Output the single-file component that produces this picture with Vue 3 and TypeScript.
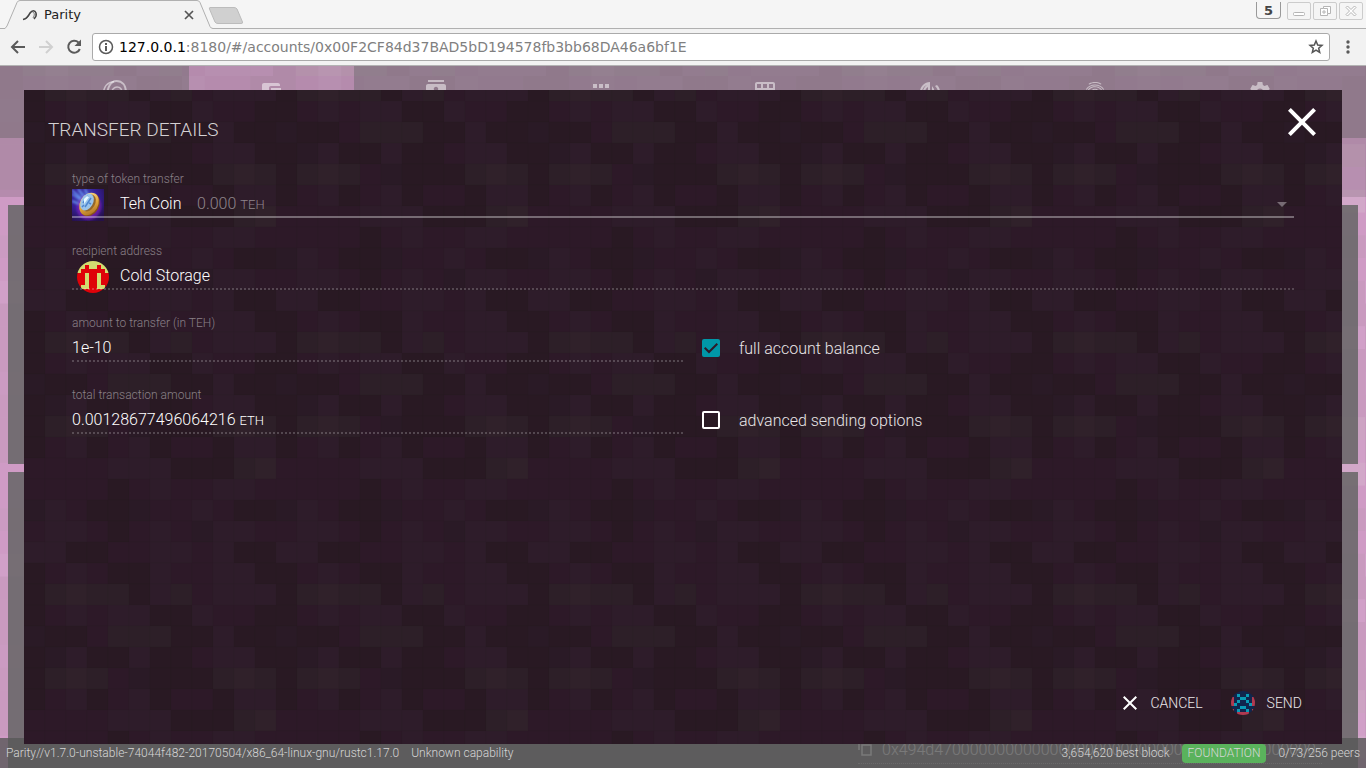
<script setup lang="ts">
import { ref } from 'vue'

const TILE = [
  'DMPMPPDDPMMD',
  'BDDMLLLDDPDD',
  'DBPDDPDDMPPD',
  'DLXLMBDDDLXL',
  'DMPDMPDMMDPP',
  'MMMMPPPDDDLX',
  'MMMMDMPMMPPM',
  'BPMDDBMMPMDD',
  'MPPMDMPMBPPM',
  'PPDDMMPPMPDD',
  'DMPMDDPMMPPD',
  'DLXLLDPLMPPP',
]
const DARK: Record<string, string> = {
  D: '#291923', B: '#2a1a26', M: '#2d1928', P: '#2e1c2a', L: '#2d1f28', X: '#30212a',
}
const PINK: Record<string, string> = {
  D: '#c99abf', B: '#cb9bc2', M: '#cf9bc5', P: '#d1a0c8', L: '#cda3c3', X: '#d2a8c9',
}
const cells = TILE.flatMap((row, y) => [...row].map((tone, x) => ({ x, y, tone })))

const navIcons = [
  { name: 'Accounts', d: 'M21 18v1c0 1.1-.9 2-2 2H5c-1.11 0-2-.9-2-2V5c0-1.1.89-2 2-2h14c1.1 0 2 .9 2 2v1h-9c-1.11 0-2 .9-2 2v8c0 1.1.89 2 2 2h9zm-9-2h10V8H12v8z' },
  { name: 'Contacts', d: 'M20 0H4v2h16V0zM4 24h16v-2H4v2zM20 4H4c-1.100 0-2 .9-2 2v12c0 1.100.9 2 2 2h16c1.100 0 2-.9 2-2V6c0-1.100-.9-2-2-2zm-8 2.750c1.240 0 2.250 1.010 2.250 2.250S13.240 11.250 12 11.250 9.750 10.240 9.750 9 10.760 6.750 12 6.750z' },
  { name: 'Applications', d: 'M4 8h4V4H4v4zm6 12h4v-4h-4v4zm-6 0h4v-4H4v4zm0-6h4v-4H4v4zm6 0h4v-4h-4v4zm6-10v4h4V4h-4zm-6 4h4V4h-4v4zm6 6h4v-4h-4v4zm0 6h4v-4h-4v4z' },
  { name: 'Contracts', d: 'M20 2H4c-1.100 0-2 .9-2 2v16c0 1.100.9 2 2 2h16c1.100 0 2-.9 2-2V4c0-1.100-.9-2-2-2zM8 20H4v-4h4v4zm0-6H4v-4h4v4zm0-6H4V4h4v4zm6 12h-4v-4h4v4zm0-6h-4v-4h4v4zm0-6h-4V4h4v4zm6 12h-4v-4h4v4zm0-6h-4v-4h4v4zm0-6h-4V4h4v4z' },
  { name: 'Status', d: 'M2 12C2 6.500 6.500 2 12 2v9h-2V7c-2 1-3 3-3 5H5c0-3 1.500-5.500 4-7-3 1-5 4-5 7zM14 10V6l2 3v3zM17 6l2-1c2 2 3 4 3 7h-2c0-2-1-4-3-6z' },
  { name: 'Signer', d: 'M17.810 4.470c-.08 0-.16-.02-.23-.06C15.660 3.420 14 3 12.010 3c-1.980 0-3.860.47-5.570 1.410-.24.13-.54.04-.68-.2-.13-.24-.04-.55.2-.68C7.820 2.520 9.860 2 12.010 2c2.130 0 3.990.47 6.030 1.520.25.13.34.43.21.67-.09.18-.26.28-.44.28zM3.500 9.720c-.4 0-.7-.5-.4-.8C5 6.200 8.300 4.600 12 4.600s7 1.600 8.900 4.300c.4.600-.4 1.200-.8.6C18.300 7 15.400 5.600 12 5.600S5.600 7 3.900 9.500zM4 13c0-4 3.600-6.700 8-6.700s8 2.900 8 7h-1c0-3.400-3-6-7-6s-7 2.500-7 5.700zM7.500 13c0-2.700 2-4.300 4.500-4.300s4.500 2 4.500 4.300h-1c0-1.800-1.500-3.300-3.500-3.300S8.500 11 8.500 13z' },
  { name: 'Settings', d: 'M19.430 12.980c.04-.32.07-.64.07-.98s-.03-.66-.07-.98l2.110-1.650c.19-.15.24-.42.12-.64l-2-3.460c-.12-.22-.39-.3-.61-.22l-2.490 1c-.52-.4-1.080-.73-1.690-.98l-.38-2.650C14.460 2.180 14.250 2 14 2h-4c-.25 0-.46.18-.49.42l-.38 2.650c-.61.25-1.170.59-1.690.98l-2.490-1c-.23-.09-.49 0-.61.22l-2 3.460c-.13.22-.07.49.12.64l2.110 1.650c-.04.32-.07.65-.07.98s.03.66.07.98l-2.110 1.650c-.19.15-.24.42-.12.64l2 3.460c.12.22.39.3.61.22l2.490-1c.52.4 1.080.73 1.690.98l.38 2.650c.03.24.24.42.49.42h4c.25 0 .46-.18.49-.42l.38-2.650c.61-.25 1.170-.59 1.690-.98l2.490 1c.23.09.49 0 .61-.22l2-3.460c.12-.22.07-.49-.12-.64l-2.110-1.650zM12 15.500c-1.930 0-3.500-1.570-3.500-3.500s1.570-3.500 3.500-3.500 3.500 1.570 3.500 3.500-1.570 3.500-3.500 3.500z' },
]

const coldStorage = ['yyyyyyyy', 'yyryyryy', 'yrrrrrry', 'rryrryrr', 'rryrryrr', 'rryrryrr', 'ryyrryyr', 'yrrrrrry']
const sender = ['nnnnnnnn', 'nntnntnn', 'rnnttnnr', 'rntnntnr', 'rtnnnntr', 'nnnttnnn', 'rntnntnr', 'nnrrrrnn']
const ID_COLORS: Record<string, string> = { y: '#d2dc70', r: '#df0209' }
const SEND_COLORS: Record<string, string> = { n: '#10264d', t: '#0a9bb5', r: '#b03a50' }

const token = ref('teh')
const recipient = ref('Cold Storage')
const amount = ref('1e-10')
const fullBalance = ref(true)
const advanced = ref(false)
const url = ref('127.0.0.1:8180/#/accounts/0x00F2CF84d37BAD5bD194578fb3bb68DA46a6bf1E')
const hash = '0x494d47' + '0'.repeat(41)
</script>

<template>
  <div class="window">
    <header class="browser">
      <div class="tabstrip">
        <svg class="tabshape" width="244" height="29" viewBox="0 0 244 29" aria-hidden="true">
          <path d="M0 28.500H5L7 26 17 2.500Q18 .5 20 .5H197Q199 .5 200 2.500L210 26.500Q211 28.500 213 28.500H244V29H0Z" fill="#f2f2f2" />
          <path d="M0 28.500H5L7 26 17 2.500Q18 .5 20 .5H197Q199 .5 200 2.500L210 26.500Q211 28.500 213 28.500H244" fill="none" stroke="#b0b0b0" />
          <path d="M210 7.500H234Q236 7.500 237 9L242.500 22Q243 23.500 241 23.500H218Q216 23.500 215 22L209.500 9Q209 7.500 210 7.500Z" fill="#d0d0d0" stroke="#bcbcbc" />
        </svg>
        <div class="tab">
          <svg width="16" height="16" viewBox="0 0 16 16" fill="none" stroke="#444" aria-hidden="true">
            <path d="M1 12.500C5 12 6 9 8 6c2-3 5-3 6 0s-1 5-2 6" stroke-width="1.500" />
            <path d="M3 12c4-1 4-5 6-7 2-1 4 1 3 4l-1 2" stroke-width="1" opacity=".7" />
          </svg>
          <span class="tabtitle">Parity</span>
          <button class="plain tabclose" aria-label="Close tab">
            <svg width="10" height="10" viewBox="0 0 10 10" stroke="#555" stroke-width="1.700"><path d="M1 1l8 8M9 1L1 9" /></svg>
          </button>
        </div>
        <div class="winbuttons">
          <span class="desk">5</span>
          <button aria-label="Minimize"><svg width="22" height="16" viewBox="0 0 22 16"><rect x="5.500" y="9.500" width="11" height="3" rx="1" /></svg></button>
          <button aria-label="Restore"><svg width="22" height="16" viewBox="0 0 22 16"><path d="M9.500 3.500h7v7h-3v2h-7v-7h3zM9 8h2v2H9zM9.500 5.500h4v5" /></svg></button>
          <button aria-label="Close window"><svg width="22" height="16" viewBox="0 0 22 16"><path d="M6 4.500l1.500-1.500L11 6.500 14.500 3 16 4.500 12.500 8 16 11.500 14.500 13 11 9.500 7.500 13 6 11.500 9.500 8z" /></svg></button>
        </div>
      </div>
      <div class="toolbar">
        <button class="plain" aria-label="Back"><svg width="20" height="20" viewBox="0 0 20 20" fill="none" stroke="#5a5a5a" stroke-width="2"><path d="M17 10H4M10 4l-6 6 6 6" /></svg></button>
        <button class="plain" aria-label="Forward" disabled><svg width="20" height="20" viewBox="0 0 20 20" fill="none" stroke="#d0d0d0" stroke-width="2"><path d="M3 10h13M10 4l6 6-6 6" /></svg></button>
        <button class="plain" aria-label="Reload"><svg width="20" height="20" viewBox="0 0 20 20"><path d="M14.500 5.500A6 6 0 1 0 15.800 12" fill="none" stroke="#5a5a5a" stroke-width="2" /><path d="M17 2.500V9h-6.500z" fill="#5a5a5a" /></svg></button>
        <div class="urlbar">
          <svg width="16" height="16" viewBox="0 0 16 16" aria-hidden="true"><circle cx="8" cy="8" r="6.500" fill="none" stroke="#5a5a5a" stroke-width="1.500" /><path d="M7 4h2v2H7zM7 7h2v5H7z" fill="#5a5a5a" /></svg>
          <div class="urltext">
            <input v-model="url" aria-label="Address" />
            <span class="host" aria-hidden="true">127.0.0.1</span>
          </div>
          <button class="plain" aria-label="Bookmark"><svg width="16" height="16" viewBox="0 0 16 16" fill="none" stroke="#555" stroke-width="1.500"><path d="M8 2l1.700 4 4.300.4-3.300 2.800 1 4.300L8 11.200l-3.700 2.300 1-4.300L2 6.400 6.300 6z" /></svg></button>
        </div>
        <button class="plain menu" aria-label="Menu"><svg width="4" height="14" viewBox="0 0 4 14" fill="#5a5a5a"><circle cx="2" cy="2" r="1.700" /><circle cx="2" cy="7" r="1.700" /><circle cx="2" cy="12" r="1.700" /></svg></button>
      </div>
    </header>

    <main class="page">
      <svg class="texture" aria-hidden="true">
        <defs>
          <pattern id="pinkTile" width="273" height="273" y="10" patternUnits="userSpaceOnUse" viewBox="0 0 12 12">
            <rect v-for="c in cells" :key="c.y * 12 + c.x" :x="c.x" :y="c.y" width="1.020" height="1.020" :fill="PINK[c.tone]" />
          </pattern>
        </defs>
        <rect width="100%" height="100%" fill="url(#pinkTile)" />
      </svg>
      <nav class="nav">
        <a href="#/" aria-label="Home">
          <svg class="logo" width="26" height="26" viewBox="0 0 26 26" fill="none" stroke="currentColor"><path d="M6 17C6 7 10 1 15.500 1S25 5 25 13" stroke-width="2" /><path d="M2 14C3 6 7 2 13 1.500M10 14c1-5 3-7 6-7s5 2 5 6" stroke-width="1.500" /></svg>
        </a>
        <a v-for="(icon, i) in navIcons" :key="icon.name" href="#/" :class="{ active: i === 0 }" :aria-label="icon.name">
          <svg width="24" height="24" viewBox="0 0 24 24" fill="currentColor" fill-rule="evenodd"><path :d="icon.d" /></svg>
        </a>
      </nav>
      <div class="actions"></div>
      <div class="cards">
        <section class="card first"></section>
        <section class="card second">
          <div class="txrow">
            <svg width="14" height="16" viewBox="0 0 14 16" fill="none" stroke="#fff" stroke-width="1.500" aria-hidden="true"><path d="M1 0v9M4 4h9v10H4z" /></svg>
            <span class="hash">{{ hash }}</span>
          </div>
        </section>
      </div>

      <footer class="status">
        <span>Parity//v1.7.0-unstable-74044f482-20170504/x86_64-linux-gnu/rustc1.17.0</span>
        <span>Unknown capability</span>
        <span class="grow"></span>
        <span>3,654,620 best block</span>
        <span class="badge">FOUNDATION</span>
        <span>0/73/256 peers</span>
      </footer>

      <div class="dialog" role="dialog" aria-labelledby="title">
        <svg class="texture" aria-hidden="true">
          <defs>
            <pattern id="darkTile" width="252" height="252" y="11" patternUnits="userSpaceOnUse" viewBox="0 0 252 252">
              <rect v-for="c in cells" :key="c.y * 12 + c.x" :x="c.x * 21" :y="c.y * 21" width="21" height="21" :fill="DARK[c.tone]" stroke="#000" stroke-opacity=".03" />
            </pattern>
          </defs>
          <rect width="100%" height="100%" fill="url(#darkTile)" />
        </svg>
        <div class="head">
          <h1 id="title">TRANSFER DETAILS</h1>
          <button class="plain close" aria-label="Close">
            <svg width="48" height="48" viewBox="0 0 24 24" fill="#fff"><path d="M19 6.410L17.590 5 12 10.590 6.410 5 5 6.410 10.590 12 5 17.590 6.410 19 12 13.410 17.590 19 19 17.590 13.410 12z" /></svg>
          </button>
        </div>

        <form class="form" @submit.prevent>
          <div class="field">
            <label for="token">type of token transfer</label>
            <div class="control solid">
              <svg class="avatar" width="32" height="32" viewBox="0 0 32 32" aria-hidden="true">
                <defs>
                  <radialGradient id="glow" cx=".4" cy=".3" r=".8"><stop offset="0" stop-color="#4a60c8" /><stop offset=".5" stop-color="#36209a" /><stop offset="1" stop-color="#251048" /></radialGradient>
                  <linearGradient id="gold" x2="1" y2="1"><stop offset="0" stop-color="#ffe79a" /><stop offset=".55" stop-color="#e0a43a" /><stop offset="1" stop-color="#9b6220" /></linearGradient>
                  <filter id="soft"><feGaussianBlur stdDeviation=".8" /></filter>
                </defs>
                <rect width="32" height="32" fill="url(#glow)" />
                <g filter="url(#soft)">
                  <path d="M0 5l12 8M0 12l10 4M6 0l8 10M13 0l4 9M0 1l12 11" stroke="#6ea4fa" stroke-width="1.500" />
                  <ellipse cx="17" cy="18" rx="12" ry="13" fill="#8d22c0" opacity=".6" transform="rotate(30 17 18)" />
                </g>
                <ellipse cx="18" cy="16" rx="9" ry="12" fill="#8b5218" transform="rotate(30 18 16)" />
                <ellipse cx="17" cy="15" rx="9" ry="12" fill="url(#gold)" transform="rotate(30 17 15)" />
                <ellipse cx="17" cy="14" rx="6" ry="9" fill="#94672c" transform="rotate(30 17 14)" />
                <ellipse cx="15" cy="13" rx="6" ry="9" fill="#9ac4ea" transform="rotate(30 15 13)" />
                <path d="M11 14l5-7M13 18l6-9M10 18l2-2M17 14l2 1" stroke="#4d86cf" stroke-width="1.500" />
                <path d="M12 10l3-3 2 1-5 7z" fill="#e8faff" />
              </svg>
              <select id="token" v-model="token"><option value="teh">Teh Coin</option></select>
              <span class="balance">0.000 <small>TEH</small></span>
              <svg class="arrow" width="24" height="24" viewBox="0 0 24 24" aria-hidden="true"><path d="M7 10l5 5 5-5z" fill="#fff" fill-opacity=".35" /></svg>
            </div>
          </div>

          <div class="field">
            <label for="recipient">recipient address</label>
            <div class="control dotted">
              <svg class="avatar round" width="32" height="32" viewBox="0 0 8 8" shape-rendering="crispEdges" aria-hidden="true">
                <template v-for="(row, y) in coldStorage" :key="y"><rect v-for="(c, x) in row" :key="x" :x="x" :y="y" width="1" height="1" :fill="ID_COLORS[c]" /></template>
              </svg>
              <input id="recipient" v-model="recipient" class="indent" type="text" />
            </div>
          </div>

          <div class="pair">
            <div class="field">
              <label for="amount">amount to transfer (in TEH)</label>
              <div class="control dotted"><input id="amount" v-model="amount" type="text" /></div>
            </div>
            <label class="check">
              <span class="box"><input v-model="fullBalance" type="checkbox" /><svg v-if="fullBalance" width="18" height="18" viewBox="0 0 18 18" fill="none" stroke="#2d1a28" stroke-width="2"><path d="M2.700 8.700L7 13l8.300-8.300" /></svg></span>
              full account balance
            </label>
          </div>

          <div class="pair">
            <div class="field">
              <label for="total">total transaction amount</label>
              <div class="control dotted"><output id="total">0.00128677496064216 <small>ETH</small></output></div>
            </div>
            <label class="check">
              <span class="box"><input v-model="advanced" type="checkbox" /><svg v-if="advanced" width="18" height="18" viewBox="0 0 18 18" fill="none" stroke="#2d1a28" stroke-width="2"><path d="M2.700 8.700L7 13l8.300-8.300" /></svg></span>
              advanced sending options
            </label>
          </div>
        </form>

        <div class="buttons">
          <button class="plain">
            <svg width="24" height="24" viewBox="0 0 24 24" fill="#fff"><path d="M19 6.410L17.590 5 12 10.590 6.410 5 5 6.410 10.590 12 5 17.590 6.410 19 12 13.410 17.590 19 19 17.590 13.410 12z" /></svg>
            CANCEL
          </button>
          <button class="plain send">
            <svg class="round" width="24" height="24" viewBox="0 0 8 8" shape-rendering="crispEdges" aria-hidden="true">
              <template v-for="(row, y) in sender" :key="y"><rect v-for="(c, x) in row" :key="x" :x="x" :y="y" width="1" height="1" :fill="SEND_COLORS[c]" /></template>
            </svg>
            SEND
          </button>
        </div>
      </div>
    </main>
  </div>
</template>

<style>
body { margin: 0; }
</style>

<style scoped>
* { box-sizing: border-box; }
.window { display: flex; flex-direction: column; height: 100vh; overflow: hidden; font-family: Roboto, sans-serif; font-weight: 300; color: #fff; }
svg { display: block; flex: none; }
.plain { border: 0; background: none; padding: 0; font: inherit; color: inherit; cursor: pointer; }

.browser { font-family: "DejaVu Sans", sans-serif; font-weight: 400; background: #f2f2f2; border-bottom: 1px solid #b3b3b3; }
.tabstrip { position: relative; display: flex; justify-content: space-between; height: 29px; background: #f5f5f5; box-shadow: inset 0 -1px #b0b0b0; }
.tabshape { position: absolute; left: 0; top: 0; }
.tab { position: relative; display: flex; align-items: center; width: 198px; padding: 0 4px 0 22px; color: #222; font-size: 13px; }
.tabtitle { flex: 1; padding-left: 6px; }
.winbuttons { display: flex; align-items: flex-start; gap: 2px; padding: 2px 3px 0 0; }
.winbuttons button { width: 24px; height: 18px; padding: 0; border: 1px solid #ccc; border-radius: 2px; background: #f5f5f5; }
.winbuttons svg { fill: #fff; stroke: #b5b5b5; }
.desk { width: 25px; height: 17px; margin-right: 4px; border: 1px solid #999; border-top: 0; border-radius: 0 0 4px 4px; color: #444; font-size: 13px; font-weight: 700; line-height: 17px; text-align: center; }
.toolbar { display: flex; align-items: center; gap: 8px; height: 36px; padding: 0 16px 0 8px; }
.urlbar { display: flex; flex: 1; align-items: center; height: 28px; padding: 0 5px; border: 1px solid #aaa; border-radius: 3px; background: #fff; }
.urltext { display: grid; flex: 1; margin-left: 5px; font-size: 14px; line-height: 20px; }
.urltext > * { grid-area: 1 / 1; }
.urltext input { border: 0; padding: 0; outline: 0; background: none; font: inherit; color: #808080; }
.host { justify-self: start; background: #fff; color: #000; pointer-events: none; }
.menu { padding-left: 8px; }

.page { position: relative; display: flex; flex: 1; flex-direction: column; min-height: 0; background: #cd9cc2; }
.texture { position: absolute; inset: 0; width: 100%; height: 100%; }
.nav { position: relative; display: flex; height: 72px; padding: 0 24px; }
.nav::before, .nav::after { content: ""; position: absolute; top: 0; bottom: 0; background: rgba(92, 92, 92, .53); width: 24px; }
.nav::before { left: 0; }
.nav::after { right: 0; }
.nav a { display: flex; flex: 1; justify-content: center; padding-top: 14px; background: rgba(92, 92, 92, .53); color: rgba(255, 255, 255, .5); }
.nav a.active { background: rgba(66, 66, 66, .18); }
.logo { margin-left: 16px; }
.actions { position: relative; height: 59px; background: rgba(66, 66, 66, .18); }
.cards { position: relative; display: flex; flex: 1; flex-direction: column; gap: 8px; padding: 8px 8px 0; }
.card { background: rgba(100, 100, 100, .84); }
.first { height: 259px; }
.second { display: flex; flex: 1; flex-direction: column; justify-content: flex-end; align-items: flex-end; padding: 0 36px 4px; }
.txrow { display: flex; gap: 10px; width: 464px; border-bottom: 1px dotted rgba(255, 255, 255, .5); font-size: 16px; line-height: 26px; }
.txrow svg { margin-top: 4px; }
.hash { white-space: nowrap; color: #fff; }

.status { position: absolute; left: 0; right: 0; bottom: 0; display: flex; align-items: center; gap: 12px; height: 30px; padding: 0 6px; background: rgba(88, 88, 88, .8); color: #d6d6d6; font-size: 12px; }
.grow { flex: 1; }
.badge { padding: 0 6px; border-radius: 4px; background: #5ab25c; line-height: 19px; }

.dialog { position: absolute; inset: 24px; display: flex; flex-direction: column; background: #2b1925; }
.head { position: relative; display: flex; justify-content: space-between; padding: 8px 16px 0 24px; height: 64px; }
h1 { margin: 0; color: #d4d1d3; font-size: 19px; font-weight: 300; line-height: 64px; }
.close { height: 48px; }
.form { position: relative; flex: 1; padding: 0 48px; }
.field { height: 72px; padding: 16px 0 8px; }
.field > label { display: block; color: #8a8087; font-size: 12px; line-height: 18px; }
.control { position: relative; display: grid; grid-template-rows: 100%; align-items: center; height: 30px; padding-top: 1px; font-size: 16px; }
.control > * { grid-area: 1 / 1; }
.control::after { content: ""; position: absolute; left: 0; right: 0; bottom: 0; }
.solid::after { border-bottom: 2px solid rgba(255, 255, 255, .35); }
.dotted::after { border-bottom: 2px dotted rgba(255, 255, 255, .2); }
.avatar { align-self: start; }
.round { border-radius: 50%; }
.avatar.round { margin-left: 5px; }
.control input, .control select { width: 100%; height: 28px; border: 0; padding: 0; outline: 0; background: none; appearance: none; color: #fff; font: inherit; }
.control select, .control .indent { padding-left: 48px; }
.balance { margin-left: 125px; justify-self: start; color: #8f858c; pointer-events: none; }
small { font-size: 13px; }
.arrow { justify-self: end; pointer-events: none; }
.pair { display: grid; grid-template-columns: 1fr 1fr; }
.check { display: flex; align-items: center; gap: 19px; height: 72px; padding: 28px 0 0 19px; color: #e8e5e7; font-size: 16px; cursor: pointer; }
.box { display: grid; width: 18px; height: 18px; }
.box > * { grid-area: 1 / 1; }
.box input { width: 18px; height: 18px; margin: 0; border: 2px solid #fff; border-radius: 2px; appearance: none; }
.box input:checked { border-color: #0097a7; background: #0097a7; }
.box svg { pointer-events: none; }
.buttons { position: relative; display: flex; justify-content: flex-end; gap: 28px; padding: 0 40px 29px; font-size: 14px; }
.buttons button { display: flex; align-items: center; gap: 8px; color: #eae7e9; }
.buttons .send { gap: 12px; }
</style>
